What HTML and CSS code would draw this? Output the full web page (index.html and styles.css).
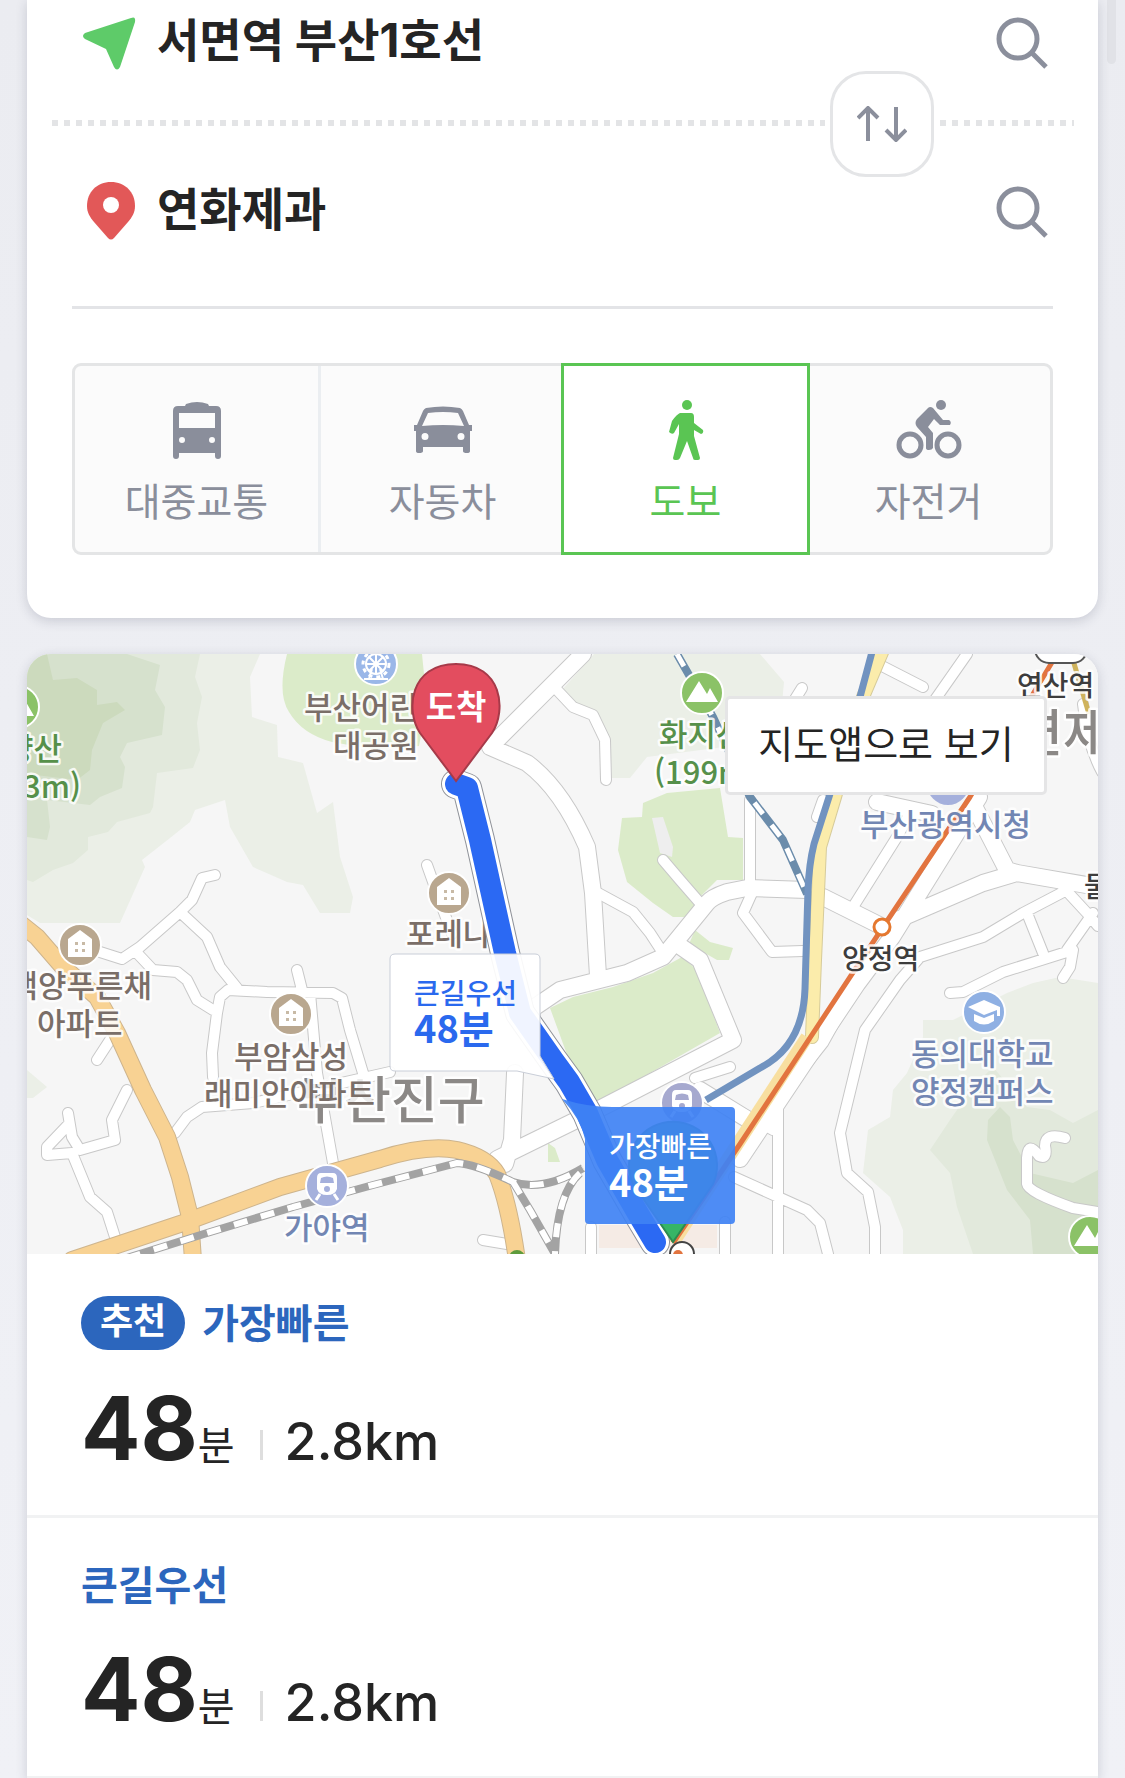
FILE: index.html
```html
<!DOCTYPE html>
<html lang="ko">
<head>
    <meta charset="UTF-8">
    <meta name="viewport" content="width=device-width, initial-scale=1.0">
    <title>길찾기</title>
    <link rel="stylesheet" href="styles.css">
</head>
<body>
    <div class="scrollbar"></div>
    <main class="page">
        <form class="card search-card">
            <div class="place place-start">
                <svg class="place-icon" viewBox="0 0 60 60" aria-hidden="true">
                    <path d="M50 5Q55 3 54 9L39 54Q36 59 33 54L25 36L4 26Q0 23 4 20Z" fill="#5ecb69"/>
                </svg>
                <input class="place-input" type="text" aria-label="출발지" value="서면역 부산1호선">
                <button class="icon-button" type="button" aria-label="출발지 검색">
                    <svg viewBox="0 0 52 52"><circle cx="22" cy="22" r="19" /><path d="M36 36L50 50"/></svg>
                </button>
            </div>
            <div class="dots"></div>
            <button class="swap" type="button" aria-label="출발지와 도착지 바꾸기">
                <svg viewBox="0 0 50 36"><path d="M11 35V3M1 12L11 2L21 12M39 1V33M29 24L39 34L49 24"/></svg>
            </button>
            <div class="place place-end">
                <svg class="place-icon" viewBox="0 0 60 60" aria-hidden="true">
                    <path d="M30 0C16 0 6 10 6 24C6 31 9 35 13 40L27 56Q30 59 33 56L47 40C51 35 54 31 54 24C54 10 44 0 30 0Z" fill="#e25858"/>
                    <circle cx="30" cy="23" r="8" fill="#fff"/>
                </svg>
                <input class="place-input" type="text" aria-label="도착지" value="연화제과">
                <button class="icon-button" type="button" aria-label="도착지 검색">
                    <svg viewBox="0 0 52 52"><circle cx="22" cy="22" r="19" /><path d="M36 36L50 50"/></svg>
                </button>
            </div>
            <div class="tabs">
                <button class="tab" type="button">
                    <svg viewBox="0 0 66 60">
                        <path fill-rule="evenodd" d="M22 4Q33 0 44 4L45 6H52Q57 6 57 11V56Q57 59 54 59H54Q51 59 51 56V53H15V56Q15 59 12 59Q9 59 9 56V11Q9 6 14 6H21ZM15 13V28H51V13ZM18 37A3 3 0 1 0 18 43A3 3 0 1 0 18 37ZM48 37A3 3 0 1 0 48 43A3 3 0 1 0 48 37Z"/>
                    </svg>
                    대중교통
                </button>
                <button class="tab" type="button">
                    <svg viewBox="0 0 66 60">
                        <path fill-rule="evenodd" d="M16 8Q33 5 50 8Q52 9 53 11L59 25H62V31H60V51Q60 53 57 53Q53 53 53 51V47H13V51Q13 53 9 53Q6 53 6 51V31H4V25H7L13 11Q14 9 16 8ZM18 13L12 26Q33 24 54 26L48 13Q33 11 18 13ZM15 33A3 3 0 1 0 15 40A3 3 0 1 0 15 33ZM51 33A3 3 0 1 0 51 40A3 3 0 1 0 51 33Z"/>
                    </svg>
                    자동차
                </button>
                <button class="tab tab-active" type="button">
                    <svg viewBox="0 0 66 60">
                        <circle cx="34" cy="5" r="5"/>
                        <path d="M27 13H38Q41 13 41 17V23L50 30Q51 33 48 34L41 30V36L47 58Q47 60 45 60H42Q40 60 40 58L34 41L27 58Q26 60 24 60H22Q20 60 20 58L26 34V24L21 33Q19 35 16 32L19 21Q24 14 27 13Z"/>
                    </svg>
                    도보
                </button>
                <button class="tab" type="button">
                    <svg viewBox="0 0 66 60">
                        <circle cx="45" cy="5" r="5"/>
                        <g fill="none" stroke="currentColor" stroke-width="5"><circle cx="14" cy="45" r="11"/><circle cx="52" cy="45" r="11"/></g>
                        <path d="M32 8Q34 6 37 8L47 20H53Q56 22 54 25H44L38 19L32 27L37 33V48Q36 50 33 50Q30 50 30 48V37L21 27Q18 23 21 19Z"/>
                    </svg>
                    자전거
                </button>
            </div>
        </form>

        <section class="card result-card">
            <div class="map">
                <svg class="map-canvas" viewBox="0 0 1071 600" role="img" aria-label="경로 지도">
                    <defs>
                        <path id="roads-small" d="M188 221L175 224L165 246L153 258L113 293L95 305L73 298
                            M153 258L180 283L193 313L210 334 M110 299L126 316L150 318L160 326L170 346L186 356
                            M186 423L185 399L190 359L193 343L201 336L240 338L306 339L315 344L323 376L336 419
                            M270 316L275 336 M283 339L290 419L306 509 M148 479L160 463L175 453L226 449L363 418
                            M70 406L83 386 M100 436L85 466L88 486L53 496L45 483L41 459 M41 471L20 493L20 501L45 499L63 543L80 558L88 583
                            M400 211L410 239L425 280 M530 36L546 53L566 61L578 86L579 126 M636 206L653 226L673 249
                            M571 239L606 258L623 279L636 299 M723 146L723 233 M725 239L716 259L745 298L776 297
                            M775 34L765 50 M853 11L896 33 M940 0L905 50 M796 146L790 163 M883 159L870 183L826 253
                            M1040 236L996 259L956 283L893 303L880 318L873 326L838 376L813 479L820 519L841 538L848 573L848 600
                            M1000 259L1016 299 M1036 233L1060 259L1071 272 M1066 259L1040 296
                            M923 339L936 338L976 318L1046 296L1043 313L1036 324
                            M1038 484Q1018 478 1018 492Q1021 506 1012 502Q1001 486 1000 504V530Q1001 538 1046 554L1071 558
                            M816 353L796 389L751 446V600 M707 523L780 556L793 569L801 600 M713 458L746 476 M564 573V600 M698 568V600
                            M456 586L480 590 M668 424L703 413 M1056 50Q1060 90 1075 118"/>
                        <path id="roads-big" d="M556 0L463 93L500 109Q535 135 560 193L566 239L571 322
                            M780 236L720 234L700 238Q685 243 680 249L636 303L600 319L533 336L505 355V370
                            M650 290L673 306L706 386L576 453L470 505 M488 419L485 486L478 510 M733 473L673 436
                            M946 150L980 216L990 219L1071 233 M870 266L956 229L990 219 M796 243L856 273
                            M952 143L865 283L830 330L713 505 M850 148L905 160"/>
                        <path id="roads-main" d="M-15 263L10 283L36 313L70 343L90 379L116 436L140 483L153 523L163 563L166 606
                            M45 606L156 569L253 533L353 505Q400 490 430 496Q460 503 470 520Q482 550 490 606"/>
                        <path id="rail" d="M100 604L180 579L266 553L346 531L430 509Q448 510 486 528Q516 538 556 514
                            M486 528L503 556L528 600 M553 519Q530 540 528 600"/>
                        <path id="rail-blue" d="M650 0L686 63L723 143L756 186L780 240"/>
                        <path id="highway" d="M856 -4L836 43L808 143L793 193L788 306L785 383"/>
                        <path id="route" d="M429 130L440 134L453 186L478 299L493 359L526 406L542 428L560 459L580 506L613 563L628 588"/>
                        <g id="pin-house">
                            <circle r="21" fill="#b9a78f" stroke="#fff" stroke-width="2"/>
                            <path d="M-12 12V-6L0 -15L12 -6V12Z" fill="#fff"/>
                            <path d="M-5 -3H-2V0H-5ZM2 -3H5V0H2ZM-5 4H-2V7H-5ZM2 4H5V7H2Z" fill="#c8baa6"/>
                        </g>
                        <g id="pin-train">
                            <circle r="21" stroke="#fff" stroke-width="2"/>
                            <path fill-rule="evenodd" d="M-6 -13H6Q10 -13 10 -8V3Q8 9 0 9Q-8 9 -10 3V-8Q-10 -13 -6 -13ZM-6 -8L-7 -3H7L6 -8Q0 -11 -6 -8ZM0 0A3 3 0 1 0 0 6A3 3 0 1 0 0 0Z" fill="#fff"/>
                            <path d="M-7 8L-11 14M7 8L11 14" stroke="#fff" stroke-width="3"/>
                        </g>
                        <g id="pin-mountain">
                            <circle r="21" fill="#8bc267" stroke="#fff" stroke-width="2"/>
                            <path d="M-16 9L-3 -12L5 1L8 -5L16 9Z" fill="#fff"/>
                        </g>
                    </defs>

                    <rect width="1071" height="600" fill="#f6f6f6"/>

                    <!-- hills -->
                    <path fill="#ebefe7" d="M233 0L223 23L225 63L250 71L251 103L276 109L290 159L306 148L313 203L326 243L323 259L293 259L276 231L260 228L226 213L203 173L198 146L168 156L163 168L143 184L115 206L118 213L93 269H13L0 261V0ZM567 0L535 36L566 63L583 89L585 124H603L620 103L720 90L755 50L757 28L733 0ZM1071 329L1033 323L1006 329L980 339L926 366H896V383L880 419L866 436L863 463L841 476L836 519L863 543L876 576V600H1071ZM0 416L20 433L6 444H0Z"/>
                    <path fill="#e2e9dc" d="M173 0L168 23L175 43L170 69L173 96L166 114L130 119L126 153L123 159L90 168L81 178L61 183V196L46 209L26 216L6 228L0 226V0ZM1071 456L1046 469L1023 456L1000 453L966 413L946 433L923 466L903 496L923 519L930 553L946 600H1071Z"/>
                    <path fill="#d6e1cd" d="M100 0L133 11L128 36L138 53L135 81L100 89L93 103L98 113L95 134L73 143L63 151L20 146L23 173L20 186L0 183V0ZM973 453L983 463L986 486L1003 519L1046 529L1071 516V600H1006L1003 566L980 536L960 486L961 466Z"/>
                    <path fill="#ccdabd" d="M20 0L26 26L50 24L70 36V51L90 48L98 56L76 69L65 96L63 116L50 126L0 120V0Z"/>

                    <!-- parks -->
                    <path fill="#dbebc9" d="M260 0Q250 40 262 58Q275 80 305 88L350 96L392 92L400 50L395 0ZM595 164L615 163L616 149L640 139L693 134L701 183L716 184V226H690L673 243L663 263H646L626 249L600 228L591 196ZM668 276L683 288L706 294L702 306H690L662 290ZM655 303L670 316L693 379L576 446L566 449L553 436L523 354L546 343L586 333L626 319ZM521 489L528 494L533 508H521Z"/>
                    <path fill="#eeeeee" d="M625 164L636 163L646 193L645 203L633 199Z"/>
                    <path fill="#f5ebe5" d="M572 571H690V594H572Z"/>

                    <!-- streets -->
                    <g class="line">
                        <use href="#roads-small" stroke="#c8c8c8" stroke-width="12"/>
                        <use href="#roads-big" stroke="#c8c8c8" stroke-width="18"/>
                        <use href="#roads-small" stroke="#fff" stroke-width="10"/>
                        <use href="#roads-big" stroke="#fff" stroke-width="16"/>
                        <use href="#roads-main" stroke="#cdb48d" stroke-width="18"/>
                        <use href="#roads-main" stroke="#f8d293" stroke-width="16"/>
                        <use href="#highway" stroke="#d6cb9a" stroke-width="14"/>
                        <use href="#highway" stroke="#fbecab" stroke-width="12"/>
                    </g>
                    <g class="line line-flat">
                        <use href="#rail" stroke="#a3a3a3" stroke-width="8"/>
                        <use href="#rail" stroke="#fff" stroke-width="6" stroke-dasharray="14 14"/>
                        <use href="#rail-blue" stroke="#6b8cab" stroke-width="8"/>
                        <use href="#rail-blue" stroke="#fff" stroke-width="5" stroke-dasharray="14 14"/>
                        <path d="M845 -2L833 43L802 143L787 190Q782 210 781 236L778 335Q776 392 733 414L679 446" stroke="#7193c0" stroke-width="7"/>
                        <path d="M780 383L646 589" stroke="#f8dfa0" stroke-width="13"/>
                        <path d="M1030 0L1006 40L943 143L856 273L713 490L646 589" stroke="#e2743f" stroke-width="5"/>
                        <path d="M1046 6L1062 60" stroke="#cfb35c" stroke-width="5"/>
                    </g>
                    <circle cx="855" cy="273" r="8" fill="#fff" stroke="#e5782f" stroke-width="3"/>
                    <rect x="1008" y="-20" width="52" height="29" rx="14" fill="#fff" stroke="#555" stroke-width="2"/>
                    <circle cx="490" cy="604" r="8" fill="#5e9b3c"/>

                    <!-- place names -->
                    <g class="district">
                        <text x="270" y="465">부산진구</text>
                        <text x="989" y="98">연제구</text>
                    </g>
                    <g class="label label-brown">
                        <text x="277" y="65">부산어린이</text>
                        <text x="306" y="103">대공원</text>
                        <text x="379" y="291">포레나</text>
                        <text x="125" y="343" text-anchor="end">백양푸른채</text>
                        <text x="10" y="381">아파트</text>
                        <text x="207" y="414">부암삼성</text>
                        <text x="177" y="451">래미안아파트</text>
                    </g>
                    <g class="label label-green">
                        <text x="35" y="106" text-anchor="end">백양산</text>
                        <text x="54" y="144" text-anchor="end">(643m)</text>
                        <text x="632" y="92">화지산</text>
                        <text x="627" y="130">(199m)</text>
                    </g>
                    <g class="label label-blue">
                        <text x="833" y="182">부산광역시청</text>
                        <text x="884" y="411">동의대학교</text>
                        <text x="884" y="449">양정캠퍼스</text>
                        <text x="257" y="585">가야역</text>
                    </g>
                    <g class="label label-station">
                        <text x="990" y="42">연산역</text>
                        <text x="815" y="315">양정역</text>
                        <text x="1057" y="243">물만골역</text>
                    </g>

                    <use href="#pin-house" x="53" y="291"/>
                    <use href="#pin-house" x="264" y="360"/>
                    <use href="#pin-house" x="422" y="239"/>
                    <use href="#pin-train" x="300" y="532" fill="#a5b0dc"/>
                    <use href="#pin-train" x="655" y="449" fill="#a6a9cf"/>
                    <use href="#pin-mountain" x="675" y="39"/>
                    <use href="#pin-mountain" x="-9" y="53"/>
                    <use href="#pin-mountain" x="1063" y="583"/>
                    <circle cx="921" cy="130" r="21" fill="#a5b0dc"/>
                    <g transform="translate(957 358)">
                        <circle r="21" fill="#8fb0e3" stroke="#fff" stroke-width="2"/>
                        <path d="M-16 -5L0 -12L16 -5V4H13V-2L0 3ZM-10 2L0 6L10 2V9Q0 16 -10 9Z" fill="#fff"/>
                    </g>
                    <g transform="translate(349 10)">
                        <circle r="21" fill="#9ab7e8" stroke="#fff" stroke-width="2"/>
                        <g fill="none" stroke="#fff" stroke-width="2">
                            <circle r="10"/>
                            <circle r="13" stroke-width="3" stroke-dasharray="4 4"/>
                            <path d="M-10 0H10M0 -10V10M-7 -7L7 7M-7 7L7 -7M-4 5L-7 15M4 5L7 15M-12 15H12"/>
                        </g>
                    </g>

                    <!-- route -->
                    <g class="line">
                        <use href="#route" stroke="#8f9299" stroke-width="30"/>
                        <use href="#route" stroke="#fff" stroke-width="28"/>
                        <use href="#route" stroke="#2b69f3" stroke-width="22"/>
                    </g>
                    <circle cx="655" cy="600" r="12" fill="#fff" stroke="#444" stroke-width="2"/>
                    <circle cx="651" cy="601" r="5" fill="#e2743f"/>
                    <path d="M646 588L606 530A44 44 0 1 1 686 530Z" fill="#36b566" stroke="#2b8b50" stroke-width="2"/>
                    <path d="M429 127L393 79C378 56 383 10 429 10C475 10 480 56 465 79Z" fill="#e34d5f" stroke="#a63a49" stroke-width="2"/>
                    <text class="pin-text" x="429" y="65">도착</text>

                    <path d="M368 300H508Q513 300 513 305V402L527 425L490 417H368Q363 417 363 412V305Q363 300 368 300Z" fill="#fff" fill-opacity=".93" stroke="#c9ced8" stroke-width="1"/>
                    <g fill="#2a69ee">
                        <text class="tip-name" x="387" y="350">큰길우선</text>
                        <text class="tip-time" x="387" y="389">48분</text>
                    </g>
                    <path d="M535 445Q560 453 585 453H704Q708 453 708 457V566Q708 570 704 570H562Q558 570 558 566V485Q554 465 535 445Z" fill="#3f82f4" fill-opacity=".92"/>
                    <g fill="#fff">
                        <text class="tip-name" x="582" y="503">가장빠른</text>
                        <text class="tip-time" x="582" y="543">48분</text>
                    </g>
                </svg>
                <button class="map-open" type="button">지도앱으로 보기</button>
            </div>

            <article class="option">
                <h2 class="option-title"><span class="badge">추천</span>가장빠른</h2>
                <p class="option-info"><strong>48</strong><span class="unit">분</span><span class="distance">2.8km</span></p>
            </article>
            <article class="option">
                <h2 class="option-title">큰길우선</h2>
                <p class="option-info"><strong>48</strong><span class="unit">분</span><span class="distance">2.8km</span></p>
            </article>
        </section>
    </main>
</body>
</html>
```
FILE: styles.css
```css
* {
    box-sizing: border-box;
}
body {
    margin: 0;
    min-height: 100vh;
    overflow: hidden;
    background: linear-gradient(#ebecf1, #f0f1f6);
    color: #242424;
    font-family: Inter, "Noto Sans CJK KR", sans-serif;
}
button, input {
    font-family: inherit;
    color: inherit;
    padding: 0;
    border: 0;
    background: none;
}
button {
    cursor: pointer;
}
.scrollbar {
    position: absolute;
    top: 0;
    right: 9px;
    width: 9px;
    height: 64px;
    border-radius: 0 0 5px 5px;
    background: #e1e2e7;
}
.page {
    display: flex;
    flex-direction: column;
    gap: 36px;
    padding: 0 27px;
}
.card {
    background: #fff;
    box-shadow: 0 3px 12px rgba(40, 45, 70, 0.18);
}

/* search */
.search-card {
    position: relative;
    padding-bottom: 63px;
    border-radius: 0 0 24px 24px;
}
.place {
    display: flex;
    align-items: center;
    gap: 16px;
    padding: 0 50px 0 54px;
}
.place-start {
    height: 120px;
    padding-bottom: 34px;
}
.place-end {
    height: 180px;
    padding-bottom: 8px;
}
.place-icon {
    flex: none;
    width: 60px;
    height: 60px;
}
.place-input {
    flex: 1;
    min-width: 0;
    height: 60px;
    margin-bottom: 12px;
    font-size: 46px;
    font-weight: 700;
    outline: none;
}
.icon-button {
    flex: none;
    width: 52px;
    height: 52px;
}
.icon-button svg, .swap svg {
    display: block;
    fill: none;
    stroke: #8b8f9c;
}
.icon-button svg {
    width: 52px;
    height: 52px;
    stroke-width: 5;
}
.dots {
    height: 6px;
    margin: 0 24px 0 25px;
    background: repeating-linear-gradient(90deg, #e3e4e6 0 6px, transparent 6px 12px);
}
.swap {
    position: absolute;
    top: 71px;
    right: 164px;
    display: flex;
    align-items: center;
    justify-content: center;
    width: 104px;
    height: 106px;
    border: 3px solid #e4e5e7;
    border-radius: 36px;
    background: #fff;
    box-shadow: 0 0 0 5px #fff;
}
.swap svg {
    width: 50px;
    height: 36px;
    stroke-width: 4;
}
.tabs {
    display: flex;
    margin: 0 45px;
    border: 3px solid #e4e5e6;
    border-radius: 9px;
    background: #fbfbfb;
    position: relative;
}
.place-end + .tabs {
    margin-top: 57px;
}
.tabs::before {
    content: "";
    position: absolute;
    top: -60px;
    left: -3px;
    right: -3px;
    height: 3px;
    background: #e3e4e7;
}
.tab {
    flex: 1;
    display: flex;
    flex-direction: column;
    align-items: center;
    gap: 16px;
    height: 186px;
    padding-top: 34px;
    font-size: 39px;
    line-height: 52px;
    color: #8a8e9b;
}
.tab:first-child {
    border-right: 3px solid #ebeef1;
}
.tab svg {
    width: 66px;
    height: 60px;
    fill: currentColor;
}
.tab-active {
    height: 192px;
    margin: -3px;
    padding-top: 34px;
    border: 3px solid #5ac553;
    background: #fff;
    color: #5ac553;
}

/* map */
.result-card {
    border-radius: 24px 24px 0 0;
}
.map {
    position: relative;
    overflow: hidden;
    border-radius: 24px 24px 0 0;
}
.map-canvas {
    display: block;
    width: 100%;
    height: auto;
    font-family: "Noto Sans CJK KR", sans-serif;
}
.map-open {
    position: absolute;
    top: 42px;
    right: 51px;
    width: 322px;
    height: 99px;
    padding-bottom: 8px;
    border: 3px solid #e5e5e6;
    border-radius: 5px;
    background: #fff;
    font-size: 38px;
}
.line {
    fill: none;
    stroke-linecap: round;
    stroke-linejoin: round;
}
.line-flat {
    stroke-linecap: butt;
}
.label, .district {
    paint-order: stroke;
    stroke: #fff;
    stroke-opacity: 0.85;
    stroke-width: 5px;
    stroke-linejoin: round;
    font-size: 31px;
    font-weight: 500;
}
.district {
    font-size: 51px;
    fill: #8b8886;
}
.label-brown {
    fill: #7a6e68;
}
.label-green {
    fill: #56904a;
}
.label-blue {
    fill: #7286b3;
}
.label-station {
    font-size: 28px;
    fill: #3d3d3d;
}
.pin-text {
    fill: #fff;
    font-size: 33px;
    font-weight: 700;
    text-anchor: middle;
}
.tip-name {
    font-size: 28px;
    font-weight: 500;
}
.tip-time {
    font-size: 38px;
    font-weight: 700;
}

/* route options */
.option {
    padding: 42px 54px 21px;
}
.option + .option {
    border-top: 3px solid #f1f2f3;
}
.option:last-child {
    border-bottom: 3px solid #f1f2f3;
}
.option-title {
    display: flex;
    align-items: center;
    gap: 17px;
    margin: 0;
    font-size: 40px;
    font-weight: 700;
    line-height: 51px;
    color: #2c66bd;
}
.badge {
    height: 54px;
    padding: 0 19px;
    border-radius: 27px;
    background: #2c66bd;
    color: #fff;
    font-size: 36px;
}
.option-info {
    display: flex;
    align-items: baseline;
    margin: 30px 0 0;
    line-height: 96px;
}
.option-info strong {
    font-size: 88px;
}
.unit {
    font-size: 40px;
}
.distance {
    display: flex;
    align-items: baseline;
    gap: 22px;
    margin-left: 25px;
    font-size: 52px;
    font-weight: 500;
}
.distance::before {
    content: "";
    width: 3px;
    height: 30px;
    background: #dedede;
}
```
